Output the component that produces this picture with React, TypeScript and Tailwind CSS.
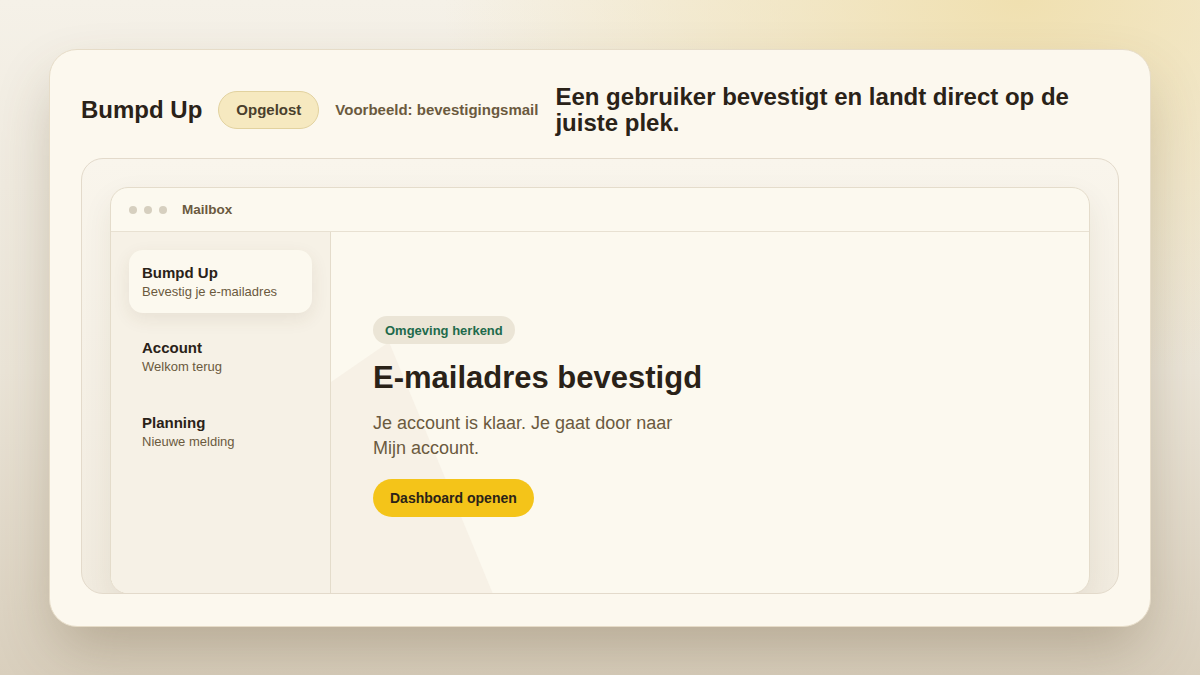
import React from "react";

function SideItem({ title, sub, active }: { title: string; sub: string; active?: boolean }) {
  return (
    <div
      className={
        "rounded-[14px] px-[13px] pt-[13px] pb-[12px] " +
        (active ? "bg-[#fcf9ef] shadow-[0_6px_18px_rgba(90,70,30,0.09)]" : "")
      }
    >
      <div className="text-[15px] leading-[20px] font-bold text-[#2a2218]">{title}</div>
      <div className="text-[13px] leading-[18px] text-[#6b5a3e]">{sub}</div>
    </div>
  );
}

export default function App() {
  return (
    <div className="font-['Liberation_Sans',Arial,sans-serif] w-[1200px] h-[675px] overflow-hidden flex items-center justify-center bg-[radial-gradient(ellipse_at_85%_0%,#f0e0b0_0%,rgba(240,224,176,0)_40%),linear-gradient(180deg,#f5f1e8_0%,#ebe5d8_55%,#d9cfbd_100%)]">
      <div className="w-[1102px] h-[578px] rounded-[28px] border border-[#e6dcc8] bg-[#fcf8ee] shadow-[0_28px_60px_-8px_rgba(90,70,35,0.3)] flex flex-col pt-[34px] px-[31px] pb-[32px]">
        {/* header */}
        <div className="flex items-center mb-[22px]">
          <div className="text-[24px] leading-none font-bold text-[#2a2218] whitespace-nowrap">Bumpd Up</div>
          <div className="ml-[16px] h-[38px] px-[17px] flex items-center rounded-full border border-[#e2d29f] bg-[#f6e9c0] text-[15px] font-bold text-[#4a3f2c] whitespace-nowrap">
            Opgelost
          </div>
          <div className="ml-[16px] text-[15px] font-bold text-[#6b5a3e] whitespace-nowrap">Voorbeeld: bevestigingsmail</div>
          <div className="ml-[17px] flex-1 text-[24px] leading-[26.4px] font-bold text-[#2a2218]">
            Een gebruiker bevestigt en landt direct op de juiste plek.
          </div>
        </div>

        {/* frame */}
        <div className="flex-1 min-h-0 flex flex-col rounded-[22px] border border-[#e3dacb] bg-[linear-gradient(180deg,#f9f5ec_0%,#f1ebdf_100%)] pt-[28px] px-[28px] overflow-hidden">
          <div className="flex-1 min-h-0 -mb-px flex flex-col rounded-[18px] border border-[#e4dccb] bg-[#fcf9ef] shadow-[0_12px_30px_rgba(80,60,30,0.08)] overflow-hidden">
            {/* titlebar */}
            <div className="h-[44px] shrink-0 flex items-center pl-[18px] border-b border-[#e8e1d2]">
              <div className="flex items-center gap-[7px]">
                <span className="w-[8px] h-[8px] rounded-full bg-[#d6cfbf]" />
                <span className="w-[8px] h-[8px] rounded-full bg-[#d6cfbf]" />
                <span className="w-[8px] h-[8px] rounded-full bg-[#d6cfbf]" />
              </div>
              <div className="ml-[15px] text-[13.5px] font-bold text-[#6b5a3e]">Mailbox</div>
            </div>
            {/* body */}
            <div className="flex-1 min-h-0 flex">
              <div className="w-[220px] shrink-0 bg-[#f6f1e6] border-r border-[#e4dccb] p-[18px] flex flex-col gap-[12px]">
                <SideItem title="Bumpd Up" sub="Bevestig je e-mailadres" active />
                <SideItem title="Account" sub="Welkom terug" />
                <SideItem title="Planning" sub="Nieuwe melding" />
              </div>
              <div className="relative flex-1 flex flex-col justify-center pl-[42px] pt-[9px]">
                <svg className="absolute inset-0 w-full h-full pointer-events-none" preserveAspectRatio="none">
                  <polygon points="0,150 58,110 162,362 0,362" fill="#f7f1e6" />
                </svg>
                <div className="relative flex flex-col items-start">
                  <div className="h-[28px] px-[12px] flex items-center rounded-full bg-[#ebe5d6] text-[13px] font-bold text-[#1e6a4b]">
                    Omgeving herkend
                  </div>
                  <div className="mt-[16px] text-[31px] leading-[36px] font-bold text-[#2a2218]">E-mailadres bevestigd</div>
                  <div className="mt-[15px] max-w-[320px] text-[18px] leading-[25px] text-[#6b5a3e]">
                    Je account is klaar. Je gaat door naar Mijn account.
                  </div>
                  <div className="mt-[18px] h-[38px] px-[17px] flex items-center rounded-full bg-[#f4c419] text-[14px] font-bold text-[#2a2218]">
                    Dashboard openen
                  </div>
                </div>
              </div>
            </div>
          </div>
        </div>
      </div>
    </div>
  );
}
